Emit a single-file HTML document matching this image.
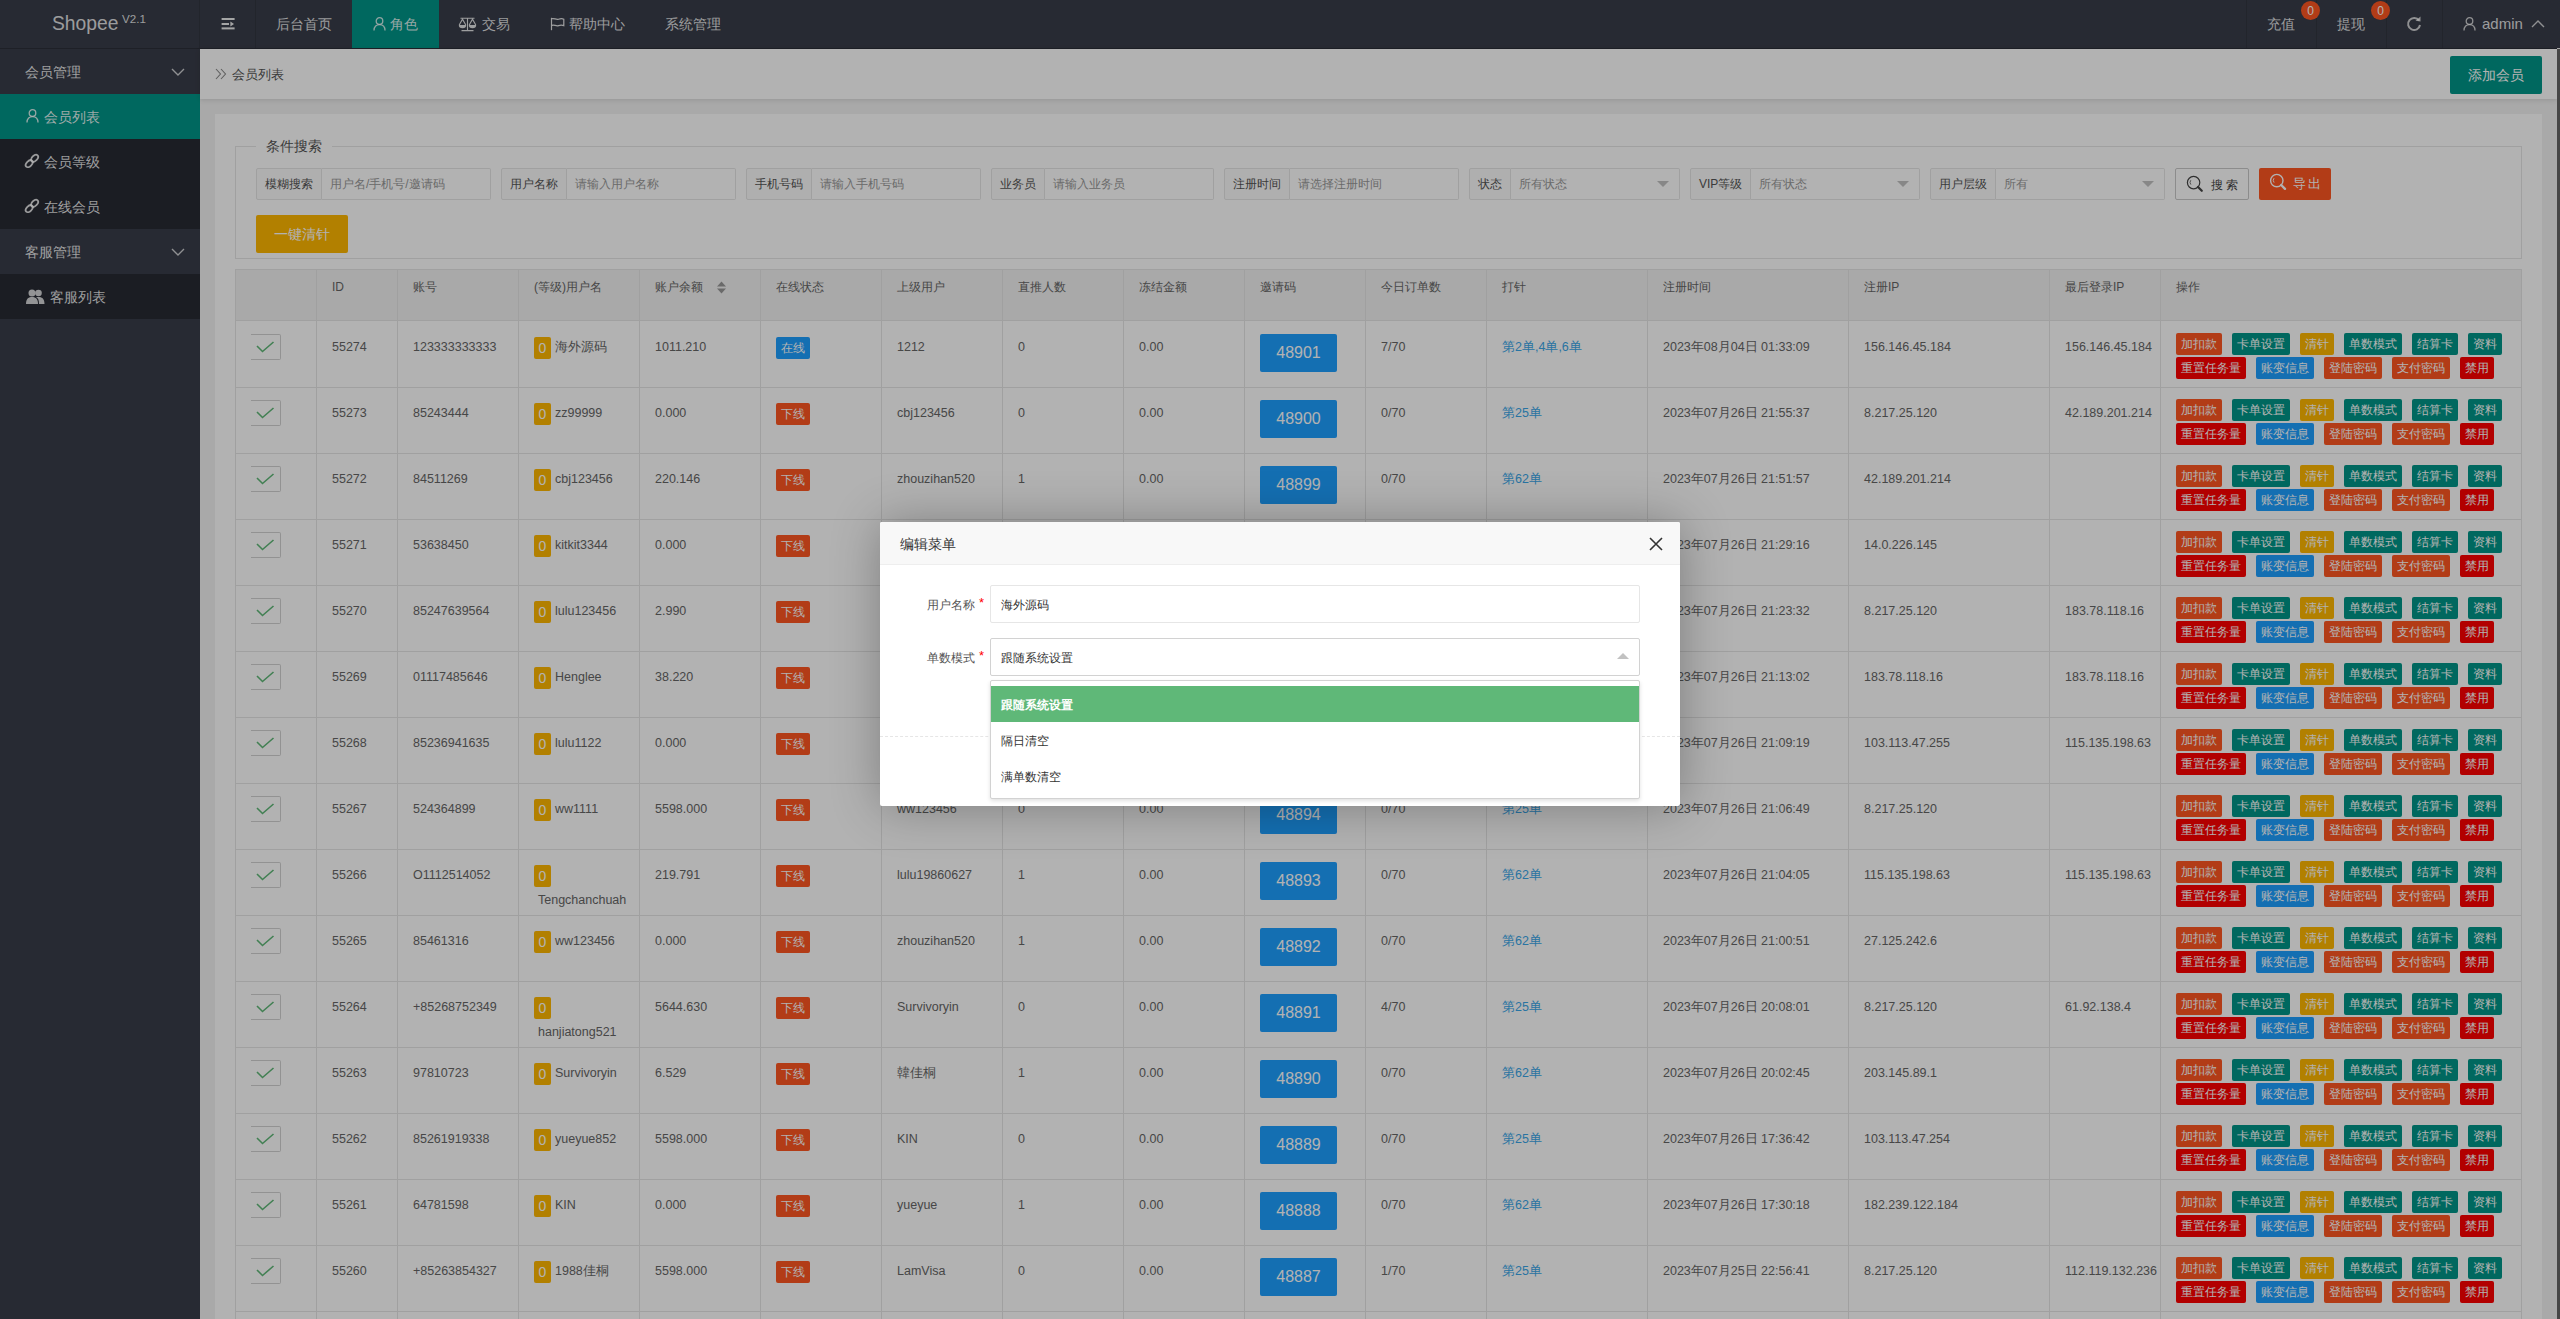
<!DOCTYPE html><html><head><meta charset='utf-8'><title>Shopee</title><style>
*{margin:0;padding:0;box-sizing:border-box}
html,body{width:2560px;height:1319px;overflow:hidden;background:#f2f2f2;
 font-family:"Liberation Sans",sans-serif;color:#666}
.a{position:absolute}
.t{position:absolute;white-space:nowrap;line-height:1}
#hdr{left:0;top:0;width:2560px;height:48px;background:#393D49}
#side{left:0;top:49px;width:200px;height:1270px;background:#393D49}
#hline48{left:0;top:48px;width:2557px;height:1px;background:#2b2e38}
.navt{color:rgba(255,255,255,.85);font-size:14px}
.sep{position:absolute;top:0;width:1px;height:48px;background:rgba(0,0,0,.12)}
.sg{position:absolute;left:0;width:200px;height:45px}
.child{background:rgba(0,0,0,.3)}
.st{color:rgba(255,255,255,.88);font-size:14px}
#crumb{left:200px;top:49px;width:2357px;height:50px;background:#fff;box-shadow:0 1px 5px rgba(0,0,0,.12)}
#card{left:215px;top:114px;width:2327px;height:1205px;background:#fff}
.fs{border:1px solid #e6e6e6}
.lbl{position:absolute;height:32px;border:1px solid #e6e6e6;background:#fbfbfb;font-size:12px;color:#555;line-height:30px;padding-left:8px;white-space:nowrap;border-radius:2px 0 0 2px}
.inp{position:absolute;height:32px;border:1px solid #e6e6e6;border-left:none;background:#fff;font-size:12px;color:#999;line-height:30px;padding-left:8px;white-space:nowrap;border-radius:0 2px 2px 0}
.tri{position:absolute;width:0;height:0;border-left:6px solid transparent;border-right:6px solid transparent;border-top:6px solid #c2c2c2}
.hline{position:absolute;height:1px;background:#e6e6e6}
.vline{position:absolute;width:1px;background:#e6e6e6}
.ct{position:absolute;white-space:nowrap;font-size:12.5px;color:#666;line-height:14px}
.bx{position:absolute;height:22px;line-height:22px;font-size:12px;color:#fff;border-radius:2px;padding:0 5px;white-space:nowrap;text-align:center}
.inv{position:absolute;width:77px;height:38px;line-height:38px;font-size:16px;color:#fff;background:#1E9FFF;border-radius:2px;text-align:center}
.chk{position:absolute;width:30px;height:26px;border:1px solid #d2d2d2;border-left:none;border-radius:0 2px 2px 0}
#shade{left:0;top:0;width:2560px;height:1319px;background:rgba(0,0,0,.3)}
#modal{left:880px;top:522px;width:800px;height:284px;background:#fff;box-shadow:1px 1px 50px rgba(0,0,0,.3);border-radius:2px}
</style></head><body><div id='hdr' class='a'><div class='t' style='left:52px;top:13.6px;font-size:19.3px;color:rgba(255,255,255,.85);font-family:"Liberation Sans",sans-serif'>Shopee</div><div class='t' style='left:122px;top:13.3px;font-size:11.6px;color:rgba(255,255,255,.85)'>V2.1</div><div class='sep' style='left:199px'></div><svg class='a' style='left:221px;top:17px' width='15' height='14' viewBox='0 0 15 14'><g fill='rgba(255,255,255,.9)'><rect x='0.6' y='1' width='13' height='2'/><rect x='0.6' y='6' width='7.4' height='2'/><path d='M9.4 4.6 L13 7 L9.4 9.4z'/><rect x='0.6' y='10.4' width='13' height='2'/></g></svg><div class='sep' style='left:255px'></div><div class='t navt' style='left:276px;top:17px'>后台首页</div><div class='a' style='left:352px;top:0;width:87px;height:48px;background:#009688'></div><svg class='a' style='left:373px;top:17px' width='13' height='14' viewBox='0 0 13 14'><circle cx='6.5' cy='4' r='3.3' fill='none' stroke='rgba(255,255,255,.8)' stroke-width='1.3'/><path d='M1 13.5 C1 9.5 3.5 7.6 6.5 7.6 C9.5 7.6 12 9.5 12 13.5' fill='none' stroke='rgba(255,255,255,.8)' stroke-width='1.3'/></svg><div class='t navt' style='left:390px;top:17px;color:rgba(255,255,255,.85)'>角色</div><svg class='a' style='left:458px;top:17px' width='19' height='15' viewBox='0 0 19 15'><g fill='none' stroke='rgba(255,255,255,.85)' stroke-width='1.1'><path d='M2.5 1.3 H16.5 M9.5 0.8 V13.5 M3.5 13.6 H15.5'/><path d='M1.2 8 L4.5 2.2 L7.8 8'/><path d='M11.2 8 L14.5 2.2 L17.8 8'/></g><g fill='rgba(255,255,255,.85)'><path d='M0.8 8 A3.7 3.2 0 0 0 8.2 8 Z'/><path d='M10.8 8 A3.7 3.2 0 0 0 18.2 8 Z'/></g></svg><div class='t navt' style='left:482px;top:17px'>交易</div><svg class='a' style='left:550px;top:17px' width='15' height='14' viewBox='0 0 15 14'><g fill='none' stroke='rgba(255,255,255,.85)' stroke-width='1.2'><path d='M1.5 0.8 V13.2'/><path d='M1.8 1.8 C4 0.8 6 3 8.5 2.2 C10.5 1.5 12.5 1.5 13.8 2.2 V8.6 C12 7.9 10.5 7.9 8.5 8.6 C6 9.5 4 7.2 1.8 8.4'/></g></svg><div class='t navt' style='left:569px;top:17px'>帮助中心</div><div class='t navt' style='left:665px;top:17px'>系统管理</div><div class='sep' style='left:2246px'></div><div class='sep' style='left:2316px'></div><div class='sep' style='left:2386px'></div><div class='sep' style='left:2442px'></div><div class='t navt' style='left:2267px;top:17px'>充值</div><div class='t navt' style='left:2337px;top:17px'>提现</div><div class='a' style='left:2301px;top:1px;width:19px;height:19px;border-radius:50%;background:#FF5722;color:#fff;font-size:12px;line-height:21px;text-align:center'>0</div><div class='a' style='left:2371px;top:1px;width:19px;height:19px;border-radius:50%;background:#FF5722;color:#fff;font-size:12px;line-height:21px;text-align:center'>0</div><svg class='a' style='left:2406px;top:16px' width='16' height='16' viewBox='0 0 16 16'><path d='M13 4.5 A6 6 0 1 0 14 9' fill='none' stroke='rgba(255,255,255,.75)' stroke-width='2'/><path d='M9.5 4.8 L14.5 5.5 L14.5 0.5 Z' fill='rgba(255,255,255,.75)'/></svg><svg class='a' style='left:2463px;top:17px' width='13' height='14' viewBox='0 0 13 14'><circle cx='6.5' cy='4' r='3.3' fill='none' stroke='rgba(255,255,255,.75)' stroke-width='1.3'/><path d='M1 13.5 C1 9.5 3.5 7.6 6.5 7.6 C9.5 7.6 12 9.5 12 13.5' fill='none' stroke='rgba(255,255,255,.75)' stroke-width='1.3'/></svg><div class='t navt' style='left:2482px;top:16px;font-size:15px'>admin</div><svg class='a' style='left:2531px;top:19px' width='14' height='9' viewBox='0 0 14 9'><path d='M1 8 L7 2 L13 8' fill='none' stroke='rgba(255,255,255,.75)' stroke-width='1.4'/></svg></div><div id='hline48' class='a'></div><div id='side' class='a'><div class='t st' style='left:25px;top:16px'>会员管理</div><svg class='a' style='left:171px;top:19px' width='14' height='8' viewBox='0 0 14 8'><path d='M1 1 L7 7 L13 1' fill='none' stroke='rgba(255,255,255,.75)' stroke-width='1.4'/></svg><div class='a child' style='left:0;top:45px;width:200px;height:135px'></div><div class='a' style='left:0;top:45px;width:200px;height:45px;background:#009688'></div><svg class='a' style='left:26px;top:60px' width='13' height='14' viewBox='0 0 13 14'><circle cx='6.5' cy='4' r='3.3' fill='none' stroke='rgba(255,255,255,.85)' stroke-width='1.3'/><path d='M1 13.5 C1 9.5 3.5 7.6 6.5 7.6 C9.5 7.6 12 9.5 12 13.5' fill='none' stroke='rgba(255,255,255,.85)' stroke-width='1.3'/></svg><div class='t st' style='left:44px;top:61px;color:rgba(255,255,255,.9)'>会员列表</div><svg class='a' style='left:24px;top:104px' width='16' height='16' viewBox='0 0 16 16'><g fill='none' stroke='rgba(255,255,255,.85)' stroke-width='1.8'><ellipse cx='10.6' cy='5.3' rx='4.2' ry='2.6' transform='rotate(-45 10.6 5.3)'/><ellipse cx='5.2' cy='10.7' rx='4.2' ry='2.6' transform='rotate(-45 5.2 10.7)'/></g></svg><div class='t st' style='left:44px;top:106px'>会员等级</div><svg class='a' style='left:24px;top:149px' width='16' height='16' viewBox='0 0 16 16'><g fill='none' stroke='rgba(255,255,255,.85)' stroke-width='1.8'><ellipse cx='10.6' cy='5.3' rx='4.2' ry='2.6' transform='rotate(-45 10.6 5.3)'/><ellipse cx='5.2' cy='10.7' rx='4.2' ry='2.6' transform='rotate(-45 5.2 10.7)'/></g></svg><div class='t st' style='left:44px;top:151px'>在线会员</div><div class='t st' style='left:25px;top:196px'>客服管理</div><svg class='a' style='left:171px;top:199px' width='14' height='8' viewBox='0 0 14 8'><path d='M1 1 L7 7 L13 1' fill='none' stroke='rgba(255,255,255,.75)' stroke-width='1.4'/></svg><div class='a child' style='left:0;top:225px;width:200px;height:45px'></div><svg class='a' style='left:26px;top:240px' width='19' height='15' viewBox='0 0 19 15'><g fill='rgba(255,255,255,.8)'><circle cx='6' cy='4' r='3.5'/><path d='M0 15 C0 9 3 8 6 8 C9 8 12 9 12 15z'/><circle cx='12.5' cy='4' r='3.3'/><path d='M10 8.3 C11 8 11.8 8 12.5 8 C15.5 8 18.5 9 18.5 15 H13 C13 11 12 9 10 8.3z'/></g></svg><div class='t st' style='left:50px;top:241px'>客服列表</div></div><div id='crumb' class='a'><svg class='a' style='left:15px;top:19px' width='12' height='12' viewBox='0 0 12 12'><path d='M1 1 L5.5 6 L1 11 M6 1 L10.5 6 L6 11' fill='none' stroke='#888' stroke-width='1.1'/></svg><div class='t' style='left:32px;top:19px;font-size:13px;color:#555'>会员列表</div><div class='a' style='left:2250px;top:7px;width:92px;height:38px;background:#009688;border-radius:2px;color:#fff;font-size:14px;line-height:38px;text-align:center'>添加会员</div></div><div class='a' style='left:2557px;top:49px;width:3px;height:1270px;background:#666'></div><div id='card' class='a'></div><div class='a fs' style='left:235px;top:146px;width:2287px;height:113px'></div><div class='t' style='left:256px;top:139px;padding:0 10px;background:#fff;font-size:14px;color:#555'>条件搜索</div><div class='lbl' style='left:256px;top:168px;width:66px'>模糊搜索</div><div class='inp' style='left:322px;top:168px;width:169px'>用户名/手机号/邀请码</div><div class='lbl' style='left:501px;top:168px;width:66px'>用户名称</div><div class='inp' style='left:567px;top:168px;width:169px'>请输入用户名称</div><div class='lbl' style='left:746px;top:168px;width:66px'>手机号码</div><div class='inp' style='left:812px;top:168px;width:169px'>请输入手机号码</div><div class='lbl' style='left:991px;top:168px;width:54px'>业务员</div><div class='inp' style='left:1045px;top:168px;width:169px'>请输入业务员</div><div class='lbl' style='left:1224px;top:168px;width:66px'>注册时间</div><div class='inp' style='left:1290px;top:168px;width:169px'>请选择注册时间</div><div class='lbl' style='left:1469px;top:168px;width:42px'>状态</div><div class='inp' style='left:1511px;top:168px;width:169px'>所有状态</div><div class='tri' style='left:1657px;top:181px'></div><div class='lbl' style='left:1690px;top:168px;width:61px'>VIP等级</div><div class='inp' style='left:1751px;top:168px;width:169px'>所有状态</div><div class='tri' style='left:1897px;top:181px'></div><div class='lbl' style='left:1930px;top:168px;width:66px'>用户层级</div><div class='inp' style='left:1996px;top:168px;width:169px'>所有</div><div class='tri' style='left:2142px;top:181px'></div><div class='a' style='left:2175px;top:168px;width:74px;height:32px;border:1px solid #C9C9C9;background:#fff;border-radius:2px'></div><svg class='a' style='left:2186px;top:175px' width='18' height='18' viewBox='0 0 18 18'><circle cx='7.6' cy='7.6' r='6.2' fill='none' stroke='#444' stroke-width='1.2'/><path d='M4.8 5.2 A3.6 3.6 0 0 0 4.9 9.6' fill='none' stroke='#666' stroke-width='0.9'/><path d='M12 12 L15.8 15.8' stroke='#444' stroke-width='2.2' stroke-linecap='round'/></svg><div class='t' style='left:2211px;top:179px;font-size:12px;color:#444;letter-spacing:3px'>搜索</div><div class='a' style='left:2259px;top:168px;width:72px;height:32px;background:#FF5722;border-radius:2px'></div><svg class='a' style='left:2269px;top:173px' width='18' height='18' viewBox='0 0 18 18'><circle cx='7.8' cy='7.6' r='6.2' fill='none' stroke='#fff' stroke-width='1.4'/><path d='M5 5.2 A3.6 3.6 0 0 0 5.1 9.6' fill='none' stroke='#fff' stroke-width='0.9'/><path d='M12.2 12 L16 15.8' stroke='#fff' stroke-width='2.4' stroke-linecap='round'/></svg><div class='t' style='left:2293px;top:177px;font-size:13px;color:#fff;letter-spacing:2px'>导出</div><div class='a' style='left:256px;top:215px;width:92px;height:38px;background:#FFB800;border-radius:2px;color:#fff;font-size:14px;line-height:38px;text-align:center'>一键清针</div><div class='a' style='left:235px;top:269px;width:2286px;height:51px;background:#f2f2f2'></div><div class='hline' style='left:235px;top:269px;width:2287px'></div><div class='hline' style='left:235px;top:320px;width:2287px'></div><div class='hline' style='left:235px;top:387px;width:2287px'></div><div class='hline' style='left:235px;top:453px;width:2287px'></div><div class='hline' style='left:235px;top:519px;width:2287px'></div><div class='hline' style='left:235px;top:585px;width:2287px'></div><div class='hline' style='left:235px;top:651px;width:2287px'></div><div class='hline' style='left:235px;top:717px;width:2287px'></div><div class='hline' style='left:235px;top:783px;width:2287px'></div><div class='hline' style='left:235px;top:849px;width:2287px'></div><div class='hline' style='left:235px;top:915px;width:2287px'></div><div class='hline' style='left:235px;top:981px;width:2287px'></div><div class='hline' style='left:235px;top:1047px;width:2287px'></div><div class='hline' style='left:235px;top:1113px;width:2287px'></div><div class='hline' style='left:235px;top:1179px;width:2287px'></div><div class='hline' style='left:235px;top:1245px;width:2287px'></div><div class='hline' style='left:235px;top:1311px;width:2287px'></div><div class='vline' style='left:235px;top:269px;height:1050px'></div><div class='vline' style='left:316px;top:269px;height:1050px'></div><div class='vline' style='left:397px;top:269px;height:1050px'></div><div class='vline' style='left:518px;top:269px;height:1050px'></div><div class='vline' style='left:639px;top:269px;height:1050px'></div><div class='vline' style='left:760px;top:269px;height:1050px'></div><div class='vline' style='left:881px;top:269px;height:1050px'></div><div class='vline' style='left:1002px;top:269px;height:1050px'></div><div class='vline' style='left:1123px;top:269px;height:1050px'></div><div class='vline' style='left:1244px;top:269px;height:1050px'></div><div class='vline' style='left:1365px;top:269px;height:1050px'></div><div class='vline' style='left:1486px;top:269px;height:1050px'></div><div class='vline' style='left:1647px;top:269px;height:1050px'></div><div class='vline' style='left:1848px;top:269px;height:1050px'></div><div class='vline' style='left:2049px;top:269px;height:1050px'></div><div class='vline' style='left:2160px;top:269px;height:1050px'></div><div class='vline' style='left:2521px;top:269px;height:1050px'></div><div class='ct' style='left:332px;top:280px;font-size:12px'>ID</div><div class='ct' style='left:413px;top:280px;font-size:12px'>账号</div><div class='ct' style='left:534px;top:280px;font-size:12px'>(等级)用户名</div><div class='ct' style='left:655px;top:280px;font-size:12px'>账户余额</div><div class='ct' style='left:776px;top:280px;font-size:12px'>在线状态</div><div class='ct' style='left:897px;top:280px;font-size:12px'>上级用户</div><div class='ct' style='left:1018px;top:280px;font-size:12px'>直推人数</div><div class='ct' style='left:1139px;top:280px;font-size:12px'>冻结金额</div><div class='ct' style='left:1260px;top:280px;font-size:12px'>邀请码</div><div class='ct' style='left:1381px;top:280px;font-size:12px'>今日订单数</div><div class='ct' style='left:1502px;top:280px;font-size:12px'>打针</div><div class='ct' style='left:1663px;top:280px;font-size:12px'>注册时间</div><div class='ct' style='left:1864px;top:280px;font-size:12px'>注册IP</div><div class='ct' style='left:2065px;top:280px;font-size:12px'>最后登录IP</div><div class='ct' style='left:2176px;top:280px;font-size:12px'>操作</div><svg class='a' style='left:716px;top:281px' width='11' height='13' viewBox='0 0 11 13'><path d='M5.5 0.5 L10 5.5 H1z M5.5 12.5 L10 7.5 H1z' fill='#999'/></svg><div class='chk' style='left:251px;top:334px'></div><svg class='a' style='left:256px;top:341px' width='19' height='13' viewBox='0 0 19 13'><path d='M1 5 L6.5 10.5 L17.5 1' fill='none' stroke='#5FB878' stroke-width='1.6'/></svg><div class='ct' style='left:332px;top:340px'>55274</div><div class='ct' style='left:413px;top:340px'>123333333333</div><div class='bx' style='left:534px;top:337px;width:17px;padding:0;background:#FFB800;font-size:14px'>0</div><div class='ct' style='left:555px;top:340px'>海外源码</div><div class='ct' style='left:655px;top:340px'>1011.210</div><div class='bx' style='left:776px;top:337px;width:34px;background:#1E9FFF'>在线</div><div class='ct' style='left:897px;top:340px'>1212</div><div class='ct' style='left:1018px;top:340px'>0</div><div class='ct' style='left:1139px;top:340px'>0.00</div><div class='inv' style='left:1260px;top:334px'>48901</div><div class='ct' style='left:1381px;top:340px'>7/70</div><div class='ct' style='left:1502px;top:340px;color:#3AA6E8'>第2单,4单,6单</div><div class='ct' style='left:1663px;top:340px'>2023年08月04日 01:33:09</div><div class='ct' style='left:1864px;top:340px'>156.146.45.184</div><div class='ct' style='left:2065px;top:340px'>156.146.45.184</div><div class='bx' style='left:2176px;top:333px;width:46px;background:#FF5722'>加扣款</div><div class='bx' style='left:2232px;top:333px;width:58px;background:#009688'>卡单设置</div><div class='bx' style='left:2300px;top:333px;width:34px;background:#FFB800'>清针</div><div class='bx' style='left:2344px;top:333px;width:58px;background:#009688'>单数模式</div><div class='bx' style='left:2412px;top:333px;width:46px;background:#009688'>结算卡</div><div class='bx' style='left:2468px;top:333px;width:34px;background:#009688'>资料</div><div class='bx' style='left:2176px;top:357px;width:70px;background:#FF0000'>重置任务量</div><div class='bx' style='left:2256px;top:357px;width:58px;background:#1E9FFF'>账变信息</div><div class='bx' style='left:2324px;top:357px;width:58px;background:#FF5722'>登陆密码</div><div class='bx' style='left:2392px;top:357px;width:58px;background:#FF5722'>支付密码</div><div class='bx' style='left:2460px;top:357px;width:34px;background:#FF0000'>禁用</div><div class='chk' style='left:251px;top:400px'></div><svg class='a' style='left:256px;top:407px' width='19' height='13' viewBox='0 0 19 13'><path d='M1 5 L6.5 10.5 L17.5 1' fill='none' stroke='#5FB878' stroke-width='1.6'/></svg><div class='ct' style='left:332px;top:406px'>55273</div><div class='ct' style='left:413px;top:406px'>85243444</div><div class='bx' style='left:534px;top:403px;width:17px;padding:0;background:#FFB800;font-size:14px'>0</div><div class='ct' style='left:555px;top:406px'>zz99999</div><div class='ct' style='left:655px;top:406px'>0.000</div><div class='bx' style='left:776px;top:403px;width:34px;background:#FF5722'>下线</div><div class='ct' style='left:897px;top:406px'>cbj123456</div><div class='ct' style='left:1018px;top:406px'>0</div><div class='ct' style='left:1139px;top:406px'>0.00</div><div class='inv' style='left:1260px;top:400px'>48900</div><div class='ct' style='left:1381px;top:406px'>0/70</div><div class='ct' style='left:1502px;top:406px;color:#3AA6E8'>第25单</div><div class='ct' style='left:1663px;top:406px'>2023年07月26日 21:55:37</div><div class='ct' style='left:1864px;top:406px'>8.217.25.120</div><div class='ct' style='left:2065px;top:406px'>42.189.201.214</div><div class='bx' style='left:2176px;top:399px;width:46px;background:#FF5722'>加扣款</div><div class='bx' style='left:2232px;top:399px;width:58px;background:#009688'>卡单设置</div><div class='bx' style='left:2300px;top:399px;width:34px;background:#FFB800'>清针</div><div class='bx' style='left:2344px;top:399px;width:58px;background:#009688'>单数模式</div><div class='bx' style='left:2412px;top:399px;width:46px;background:#009688'>结算卡</div><div class='bx' style='left:2468px;top:399px;width:34px;background:#009688'>资料</div><div class='bx' style='left:2176px;top:423px;width:70px;background:#FF0000'>重置任务量</div><div class='bx' style='left:2256px;top:423px;width:58px;background:#1E9FFF'>账变信息</div><div class='bx' style='left:2324px;top:423px;width:58px;background:#FF5722'>登陆密码</div><div class='bx' style='left:2392px;top:423px;width:58px;background:#FF5722'>支付密码</div><div class='bx' style='left:2460px;top:423px;width:34px;background:#FF0000'>禁用</div><div class='chk' style='left:251px;top:466px'></div><svg class='a' style='left:256px;top:473px' width='19' height='13' viewBox='0 0 19 13'><path d='M1 5 L6.5 10.5 L17.5 1' fill='none' stroke='#5FB878' stroke-width='1.6'/></svg><div class='ct' style='left:332px;top:472px'>55272</div><div class='ct' style='left:413px;top:472px'>84511269</div><div class='bx' style='left:534px;top:469px;width:17px;padding:0;background:#FFB800;font-size:14px'>0</div><div class='ct' style='left:555px;top:472px'>cbj123456</div><div class='ct' style='left:655px;top:472px'>220.146</div><div class='bx' style='left:776px;top:469px;width:34px;background:#FF5722'>下线</div><div class='ct' style='left:897px;top:472px'>zhouzihan520</div><div class='ct' style='left:1018px;top:472px'>1</div><div class='ct' style='left:1139px;top:472px'>0.00</div><div class='inv' style='left:1260px;top:466px'>48899</div><div class='ct' style='left:1381px;top:472px'>0/70</div><div class='ct' style='left:1502px;top:472px;color:#3AA6E8'>第62单</div><div class='ct' style='left:1663px;top:472px'>2023年07月26日 21:51:57</div><div class='ct' style='left:1864px;top:472px'>42.189.201.214</div><div class='bx' style='left:2176px;top:465px;width:46px;background:#FF5722'>加扣款</div><div class='bx' style='left:2232px;top:465px;width:58px;background:#009688'>卡单设置</div><div class='bx' style='left:2300px;top:465px;width:34px;background:#FFB800'>清针</div><div class='bx' style='left:2344px;top:465px;width:58px;background:#009688'>单数模式</div><div class='bx' style='left:2412px;top:465px;width:46px;background:#009688'>结算卡</div><div class='bx' style='left:2468px;top:465px;width:34px;background:#009688'>资料</div><div class='bx' style='left:2176px;top:489px;width:70px;background:#FF0000'>重置任务量</div><div class='bx' style='left:2256px;top:489px;width:58px;background:#1E9FFF'>账变信息</div><div class='bx' style='left:2324px;top:489px;width:58px;background:#FF5722'>登陆密码</div><div class='bx' style='left:2392px;top:489px;width:58px;background:#FF5722'>支付密码</div><div class='bx' style='left:2460px;top:489px;width:34px;background:#FF0000'>禁用</div><div class='chk' style='left:251px;top:532px'></div><svg class='a' style='left:256px;top:539px' width='19' height='13' viewBox='0 0 19 13'><path d='M1 5 L6.5 10.5 L17.5 1' fill='none' stroke='#5FB878' stroke-width='1.6'/></svg><div class='ct' style='left:332px;top:538px'>55271</div><div class='ct' style='left:413px;top:538px'>53638450</div><div class='bx' style='left:534px;top:535px;width:17px;padding:0;background:#FFB800;font-size:14px'>0</div><div class='ct' style='left:555px;top:538px'>kitkit3344</div><div class='ct' style='left:655px;top:538px'>0.000</div><div class='bx' style='left:776px;top:535px;width:34px;background:#FF5722'>下线</div><div class='ct' style='left:897px;top:538px'>zhouzihan520</div><div class='ct' style='left:1018px;top:538px'>0</div><div class='ct' style='left:1139px;top:538px'>0.00</div><div class='inv' style='left:1260px;top:532px'>48898</div><div class='ct' style='left:1381px;top:538px'>0/70</div><div class='ct' style='left:1502px;top:538px;color:#3AA6E8'>第25单</div><div class='ct' style='left:1663px;top:538px'>2023年07月26日 21:29:16</div><div class='ct' style='left:1864px;top:538px'>14.0.226.145</div><div class='bx' style='left:2176px;top:531px;width:46px;background:#FF5722'>加扣款</div><div class='bx' style='left:2232px;top:531px;width:58px;background:#009688'>卡单设置</div><div class='bx' style='left:2300px;top:531px;width:34px;background:#FFB800'>清针</div><div class='bx' style='left:2344px;top:531px;width:58px;background:#009688'>单数模式</div><div class='bx' style='left:2412px;top:531px;width:46px;background:#009688'>结算卡</div><div class='bx' style='left:2468px;top:531px;width:34px;background:#009688'>资料</div><div class='bx' style='left:2176px;top:555px;width:70px;background:#FF0000'>重置任务量</div><div class='bx' style='left:2256px;top:555px;width:58px;background:#1E9FFF'>账变信息</div><div class='bx' style='left:2324px;top:555px;width:58px;background:#FF5722'>登陆密码</div><div class='bx' style='left:2392px;top:555px;width:58px;background:#FF5722'>支付密码</div><div class='bx' style='left:2460px;top:555px;width:34px;background:#FF0000'>禁用</div><div class='chk' style='left:251px;top:598px'></div><svg class='a' style='left:256px;top:605px' width='19' height='13' viewBox='0 0 19 13'><path d='M1 5 L6.5 10.5 L17.5 1' fill='none' stroke='#5FB878' stroke-width='1.6'/></svg><div class='ct' style='left:332px;top:604px'>55270</div><div class='ct' style='left:413px;top:604px'>85247639564</div><div class='bx' style='left:534px;top:601px;width:17px;padding:0;background:#FFB800;font-size:14px'>0</div><div class='ct' style='left:555px;top:604px'>lulu123456</div><div class='ct' style='left:655px;top:604px'>2.990</div><div class='bx' style='left:776px;top:601px;width:34px;background:#FF5722'>下线</div><div class='ct' style='left:897px;top:604px'>lulu1122</div><div class='ct' style='left:1018px;top:604px'>0</div><div class='ct' style='left:1139px;top:604px'>0.00</div><div class='inv' style='left:1260px;top:598px'>48897</div><div class='ct' style='left:1381px;top:604px'>0/70</div><div class='ct' style='left:1502px;top:604px;color:#3AA6E8'>第62单</div><div class='ct' style='left:1663px;top:604px'>2023年07月26日 21:23:32</div><div class='ct' style='left:1864px;top:604px'>8.217.25.120</div><div class='ct' style='left:2065px;top:604px'>183.78.118.16</div><div class='bx' style='left:2176px;top:597px;width:46px;background:#FF5722'>加扣款</div><div class='bx' style='left:2232px;top:597px;width:58px;background:#009688'>卡单设置</div><div class='bx' style='left:2300px;top:597px;width:34px;background:#FFB800'>清针</div><div class='bx' style='left:2344px;top:597px;width:58px;background:#009688'>单数模式</div><div class='bx' style='left:2412px;top:597px;width:46px;background:#009688'>结算卡</div><div class='bx' style='left:2468px;top:597px;width:34px;background:#009688'>资料</div><div class='bx' style='left:2176px;top:621px;width:70px;background:#FF0000'>重置任务量</div><div class='bx' style='left:2256px;top:621px;width:58px;background:#1E9FFF'>账变信息</div><div class='bx' style='left:2324px;top:621px;width:58px;background:#FF5722'>登陆密码</div><div class='bx' style='left:2392px;top:621px;width:58px;background:#FF5722'>支付密码</div><div class='bx' style='left:2460px;top:621px;width:34px;background:#FF0000'>禁用</div><div class='chk' style='left:251px;top:664px'></div><svg class='a' style='left:256px;top:671px' width='19' height='13' viewBox='0 0 19 13'><path d='M1 5 L6.5 10.5 L17.5 1' fill='none' stroke='#5FB878' stroke-width='1.6'/></svg><div class='ct' style='left:332px;top:670px'>55269</div><div class='ct' style='left:413px;top:670px'>01117485646</div><div class='bx' style='left:534px;top:667px;width:17px;padding:0;background:#FFB800;font-size:14px'>0</div><div class='ct' style='left:555px;top:670px'>Henglee</div><div class='ct' style='left:655px;top:670px'>38.220</div><div class='bx' style='left:776px;top:667px;width:34px;background:#FF5722'>下线</div><div class='ct' style='left:897px;top:670px'>lulu1122</div><div class='ct' style='left:1018px;top:670px'>0</div><div class='ct' style='left:1139px;top:670px'>0.00</div><div class='inv' style='left:1260px;top:664px'>48896</div><div class='ct' style='left:1381px;top:670px'>0/70</div><div class='ct' style='left:1502px;top:670px;color:#3AA6E8'>第25单</div><div class='ct' style='left:1663px;top:670px'>2023年07月26日 21:13:02</div><div class='ct' style='left:1864px;top:670px'>183.78.118.16</div><div class='ct' style='left:2065px;top:670px'>183.78.118.16</div><div class='bx' style='left:2176px;top:663px;width:46px;background:#FF5722'>加扣款</div><div class='bx' style='left:2232px;top:663px;width:58px;background:#009688'>卡单设置</div><div class='bx' style='left:2300px;top:663px;width:34px;background:#FFB800'>清针</div><div class='bx' style='left:2344px;top:663px;width:58px;background:#009688'>单数模式</div><div class='bx' style='left:2412px;top:663px;width:46px;background:#009688'>结算卡</div><div class='bx' style='left:2468px;top:663px;width:34px;background:#009688'>资料</div><div class='bx' style='left:2176px;top:687px;width:70px;background:#FF0000'>重置任务量</div><div class='bx' style='left:2256px;top:687px;width:58px;background:#1E9FFF'>账变信息</div><div class='bx' style='left:2324px;top:687px;width:58px;background:#FF5722'>登陆密码</div><div class='bx' style='left:2392px;top:687px;width:58px;background:#FF5722'>支付密码</div><div class='bx' style='left:2460px;top:687px;width:34px;background:#FF0000'>禁用</div><div class='chk' style='left:251px;top:730px'></div><svg class='a' style='left:256px;top:737px' width='19' height='13' viewBox='0 0 19 13'><path d='M1 5 L6.5 10.5 L17.5 1' fill='none' stroke='#5FB878' stroke-width='1.6'/></svg><div class='ct' style='left:332px;top:736px'>55268</div><div class='ct' style='left:413px;top:736px'>85236941635</div><div class='bx' style='left:534px;top:733px;width:17px;padding:0;background:#FFB800;font-size:14px'>0</div><div class='ct' style='left:555px;top:736px'>lulu1122</div><div class='ct' style='left:655px;top:736px'>0.000</div><div class='bx' style='left:776px;top:733px;width:34px;background:#FF5722'>下线</div><div class='ct' style='left:897px;top:736px'>ww123456</div><div class='ct' style='left:1018px;top:736px'>1</div><div class='ct' style='left:1139px;top:736px'>0.00</div><div class='inv' style='left:1260px;top:730px'>48895</div><div class='ct' style='left:1381px;top:736px'>0/70</div><div class='ct' style='left:1502px;top:736px;color:#3AA6E8'>第62单</div><div class='ct' style='left:1663px;top:736px'>2023年07月26日 21:09:19</div><div class='ct' style='left:1864px;top:736px'>103.113.47.255</div><div class='ct' style='left:2065px;top:736px'>115.135.198.63</div><div class='bx' style='left:2176px;top:729px;width:46px;background:#FF5722'>加扣款</div><div class='bx' style='left:2232px;top:729px;width:58px;background:#009688'>卡单设置</div><div class='bx' style='left:2300px;top:729px;width:34px;background:#FFB800'>清针</div><div class='bx' style='left:2344px;top:729px;width:58px;background:#009688'>单数模式</div><div class='bx' style='left:2412px;top:729px;width:46px;background:#009688'>结算卡</div><div class='bx' style='left:2468px;top:729px;width:34px;background:#009688'>资料</div><div class='bx' style='left:2176px;top:753px;width:70px;background:#FF0000'>重置任务量</div><div class='bx' style='left:2256px;top:753px;width:58px;background:#1E9FFF'>账变信息</div><div class='bx' style='left:2324px;top:753px;width:58px;background:#FF5722'>登陆密码</div><div class='bx' style='left:2392px;top:753px;width:58px;background:#FF5722'>支付密码</div><div class='bx' style='left:2460px;top:753px;width:34px;background:#FF0000'>禁用</div><div class='chk' style='left:251px;top:796px'></div><svg class='a' style='left:256px;top:803px' width='19' height='13' viewBox='0 0 19 13'><path d='M1 5 L6.5 10.5 L17.5 1' fill='none' stroke='#5FB878' stroke-width='1.6'/></svg><div class='ct' style='left:332px;top:802px'>55267</div><div class='ct' style='left:413px;top:802px'>524364899</div><div class='bx' style='left:534px;top:799px;width:17px;padding:0;background:#FFB800;font-size:14px'>0</div><div class='ct' style='left:555px;top:802px'>ww1111</div><div class='ct' style='left:655px;top:802px'>5598.000</div><div class='bx' style='left:776px;top:799px;width:34px;background:#FF5722'>下线</div><div class='ct' style='left:897px;top:802px'>ww123456</div><div class='ct' style='left:1018px;top:802px'>0</div><div class='ct' style='left:1139px;top:802px'>0.00</div><div class='inv' style='left:1260px;top:796px'>48894</div><div class='ct' style='left:1381px;top:802px'>0/70</div><div class='ct' style='left:1502px;top:802px;color:#3AA6E8'>第25单</div><div class='ct' style='left:1663px;top:802px'>2023年07月26日 21:06:49</div><div class='ct' style='left:1864px;top:802px'>8.217.25.120</div><div class='bx' style='left:2176px;top:795px;width:46px;background:#FF5722'>加扣款</div><div class='bx' style='left:2232px;top:795px;width:58px;background:#009688'>卡单设置</div><div class='bx' style='left:2300px;top:795px;width:34px;background:#FFB800'>清针</div><div class='bx' style='left:2344px;top:795px;width:58px;background:#009688'>单数模式</div><div class='bx' style='left:2412px;top:795px;width:46px;background:#009688'>结算卡</div><div class='bx' style='left:2468px;top:795px;width:34px;background:#009688'>资料</div><div class='bx' style='left:2176px;top:819px;width:70px;background:#FF0000'>重置任务量</div><div class='bx' style='left:2256px;top:819px;width:58px;background:#1E9FFF'>账变信息</div><div class='bx' style='left:2324px;top:819px;width:58px;background:#FF5722'>登陆密码</div><div class='bx' style='left:2392px;top:819px;width:58px;background:#FF5722'>支付密码</div><div class='bx' style='left:2460px;top:819px;width:34px;background:#FF0000'>禁用</div><div class='chk' style='left:251px;top:862px'></div><svg class='a' style='left:256px;top:869px' width='19' height='13' viewBox='0 0 19 13'><path d='M1 5 L6.5 10.5 L17.5 1' fill='none' stroke='#5FB878' stroke-width='1.6'/></svg><div class='ct' style='left:332px;top:868px'>55266</div><div class='ct' style='left:413px;top:868px'>O1112514052</div><div class='bx' style='left:534px;top:865px;width:17px;padding:0;background:#FFB800;font-size:14px'>0</div><div class='ct' style='left:538px;top:893px'>Tengchanchuah</div><div class='ct' style='left:655px;top:868px'>219.791</div><div class='bx' style='left:776px;top:865px;width:34px;background:#FF5722'>下线</div><div class='ct' style='left:897px;top:868px'>lulu19860627</div><div class='ct' style='left:1018px;top:868px'>1</div><div class='ct' style='left:1139px;top:868px'>0.00</div><div class='inv' style='left:1260px;top:862px'>48893</div><div class='ct' style='left:1381px;top:868px'>0/70</div><div class='ct' style='left:1502px;top:868px;color:#3AA6E8'>第62单</div><div class='ct' style='left:1663px;top:868px'>2023年07月26日 21:04:05</div><div class='ct' style='left:1864px;top:868px'>115.135.198.63</div><div class='ct' style='left:2065px;top:868px'>115.135.198.63</div><div class='bx' style='left:2176px;top:861px;width:46px;background:#FF5722'>加扣款</div><div class='bx' style='left:2232px;top:861px;width:58px;background:#009688'>卡单设置</div><div class='bx' style='left:2300px;top:861px;width:34px;background:#FFB800'>清针</div><div class='bx' style='left:2344px;top:861px;width:58px;background:#009688'>单数模式</div><div class='bx' style='left:2412px;top:861px;width:46px;background:#009688'>结算卡</div><div class='bx' style='left:2468px;top:861px;width:34px;background:#009688'>资料</div><div class='bx' style='left:2176px;top:885px;width:70px;background:#FF0000'>重置任务量</div><div class='bx' style='left:2256px;top:885px;width:58px;background:#1E9FFF'>账变信息</div><div class='bx' style='left:2324px;top:885px;width:58px;background:#FF5722'>登陆密码</div><div class='bx' style='left:2392px;top:885px;width:58px;background:#FF5722'>支付密码</div><div class='bx' style='left:2460px;top:885px;width:34px;background:#FF0000'>禁用</div><div class='chk' style='left:251px;top:928px'></div><svg class='a' style='left:256px;top:935px' width='19' height='13' viewBox='0 0 19 13'><path d='M1 5 L6.5 10.5 L17.5 1' fill='none' stroke='#5FB878' stroke-width='1.6'/></svg><div class='ct' style='left:332px;top:934px'>55265</div><div class='ct' style='left:413px;top:934px'>85461316</div><div class='bx' style='left:534px;top:931px;width:17px;padding:0;background:#FFB800;font-size:14px'>0</div><div class='ct' style='left:555px;top:934px'>ww123456</div><div class='ct' style='left:655px;top:934px'>0.000</div><div class='bx' style='left:776px;top:931px;width:34px;background:#FF5722'>下线</div><div class='ct' style='left:897px;top:934px'>zhouzihan520</div><div class='ct' style='left:1018px;top:934px'>1</div><div class='ct' style='left:1139px;top:934px'>0.00</div><div class='inv' style='left:1260px;top:928px'>48892</div><div class='ct' style='left:1381px;top:934px'>0/70</div><div class='ct' style='left:1502px;top:934px;color:#3AA6E8'>第62单</div><div class='ct' style='left:1663px;top:934px'>2023年07月26日 21:00:51</div><div class='ct' style='left:1864px;top:934px'>27.125.242.6</div><div class='bx' style='left:2176px;top:927px;width:46px;background:#FF5722'>加扣款</div><div class='bx' style='left:2232px;top:927px;width:58px;background:#009688'>卡单设置</div><div class='bx' style='left:2300px;top:927px;width:34px;background:#FFB800'>清针</div><div class='bx' style='left:2344px;top:927px;width:58px;background:#009688'>单数模式</div><div class='bx' style='left:2412px;top:927px;width:46px;background:#009688'>结算卡</div><div class='bx' style='left:2468px;top:927px;width:34px;background:#009688'>资料</div><div class='bx' style='left:2176px;top:951px;width:70px;background:#FF0000'>重置任务量</div><div class='bx' style='left:2256px;top:951px;width:58px;background:#1E9FFF'>账变信息</div><div class='bx' style='left:2324px;top:951px;width:58px;background:#FF5722'>登陆密码</div><div class='bx' style='left:2392px;top:951px;width:58px;background:#FF5722'>支付密码</div><div class='bx' style='left:2460px;top:951px;width:34px;background:#FF0000'>禁用</div><div class='chk' style='left:251px;top:994px'></div><svg class='a' style='left:256px;top:1001px' width='19' height='13' viewBox='0 0 19 13'><path d='M1 5 L6.5 10.5 L17.5 1' fill='none' stroke='#5FB878' stroke-width='1.6'/></svg><div class='ct' style='left:332px;top:1000px'>55264</div><div class='ct' style='left:413px;top:1000px'>+85268752349</div><div class='bx' style='left:534px;top:997px;width:17px;padding:0;background:#FFB800;font-size:14px'>0</div><div class='ct' style='left:538px;top:1025px'>hanjiatong521</div><div class='ct' style='left:655px;top:1000px'>5644.630</div><div class='bx' style='left:776px;top:997px;width:34px;background:#FF5722'>下线</div><div class='ct' style='left:897px;top:1000px'>Survivoryin</div><div class='ct' style='left:1018px;top:1000px'>0</div><div class='ct' style='left:1139px;top:1000px'>0.00</div><div class='inv' style='left:1260px;top:994px'>48891</div><div class='ct' style='left:1381px;top:1000px'>4/70</div><div class='ct' style='left:1502px;top:1000px;color:#3AA6E8'>第25单</div><div class='ct' style='left:1663px;top:1000px'>2023年07月26日 20:08:01</div><div class='ct' style='left:1864px;top:1000px'>8.217.25.120</div><div class='ct' style='left:2065px;top:1000px'>61.92.138.4</div><div class='bx' style='left:2176px;top:993px;width:46px;background:#FF5722'>加扣款</div><div class='bx' style='left:2232px;top:993px;width:58px;background:#009688'>卡单设置</div><div class='bx' style='left:2300px;top:993px;width:34px;background:#FFB800'>清针</div><div class='bx' style='left:2344px;top:993px;width:58px;background:#009688'>单数模式</div><div class='bx' style='left:2412px;top:993px;width:46px;background:#009688'>结算卡</div><div class='bx' style='left:2468px;top:993px;width:34px;background:#009688'>资料</div><div class='bx' style='left:2176px;top:1017px;width:70px;background:#FF0000'>重置任务量</div><div class='bx' style='left:2256px;top:1017px;width:58px;background:#1E9FFF'>账变信息</div><div class='bx' style='left:2324px;top:1017px;width:58px;background:#FF5722'>登陆密码</div><div class='bx' style='left:2392px;top:1017px;width:58px;background:#FF5722'>支付密码</div><div class='bx' style='left:2460px;top:1017px;width:34px;background:#FF0000'>禁用</div><div class='chk' style='left:251px;top:1060px'></div><svg class='a' style='left:256px;top:1067px' width='19' height='13' viewBox='0 0 19 13'><path d='M1 5 L6.5 10.5 L17.5 1' fill='none' stroke='#5FB878' stroke-width='1.6'/></svg><div class='ct' style='left:332px;top:1066px'>55263</div><div class='ct' style='left:413px;top:1066px'>97810723</div><div class='bx' style='left:534px;top:1063px;width:17px;padding:0;background:#FFB800;font-size:14px'>0</div><div class='ct' style='left:555px;top:1066px'>Survivoryin</div><div class='ct' style='left:655px;top:1066px'>6.529</div><div class='bx' style='left:776px;top:1063px;width:34px;background:#FF5722'>下线</div><div class='ct' style='left:897px;top:1066px'>韓佳桐</div><div class='ct' style='left:1018px;top:1066px'>1</div><div class='ct' style='left:1139px;top:1066px'>0.00</div><div class='inv' style='left:1260px;top:1060px'>48890</div><div class='ct' style='left:1381px;top:1066px'>0/70</div><div class='ct' style='left:1502px;top:1066px;color:#3AA6E8'>第62单</div><div class='ct' style='left:1663px;top:1066px'>2023年07月26日 20:02:45</div><div class='ct' style='left:1864px;top:1066px'>203.145.89.1</div><div class='bx' style='left:2176px;top:1059px;width:46px;background:#FF5722'>加扣款</div><div class='bx' style='left:2232px;top:1059px;width:58px;background:#009688'>卡单设置</div><div class='bx' style='left:2300px;top:1059px;width:34px;background:#FFB800'>清针</div><div class='bx' style='left:2344px;top:1059px;width:58px;background:#009688'>单数模式</div><div class='bx' style='left:2412px;top:1059px;width:46px;background:#009688'>结算卡</div><div class='bx' style='left:2468px;top:1059px;width:34px;background:#009688'>资料</div><div class='bx' style='left:2176px;top:1083px;width:70px;background:#FF0000'>重置任务量</div><div class='bx' style='left:2256px;top:1083px;width:58px;background:#1E9FFF'>账变信息</div><div class='bx' style='left:2324px;top:1083px;width:58px;background:#FF5722'>登陆密码</div><div class='bx' style='left:2392px;top:1083px;width:58px;background:#FF5722'>支付密码</div><div class='bx' style='left:2460px;top:1083px;width:34px;background:#FF0000'>禁用</div><div class='chk' style='left:251px;top:1126px'></div><svg class='a' style='left:256px;top:1133px' width='19' height='13' viewBox='0 0 19 13'><path d='M1 5 L6.5 10.5 L17.5 1' fill='none' stroke='#5FB878' stroke-width='1.6'/></svg><div class='ct' style='left:332px;top:1132px'>55262</div><div class='ct' style='left:413px;top:1132px'>85261919338</div><div class='bx' style='left:534px;top:1129px;width:17px;padding:0;background:#FFB800;font-size:14px'>0</div><div class='ct' style='left:555px;top:1132px'>yueyue852</div><div class='ct' style='left:655px;top:1132px'>5598.000</div><div class='bx' style='left:776px;top:1129px;width:34px;background:#FF5722'>下线</div><div class='ct' style='left:897px;top:1132px'>KIN</div><div class='ct' style='left:1018px;top:1132px'>0</div><div class='ct' style='left:1139px;top:1132px'>0.00</div><div class='inv' style='left:1260px;top:1126px'>48889</div><div class='ct' style='left:1381px;top:1132px'>0/70</div><div class='ct' style='left:1502px;top:1132px;color:#3AA6E8'>第25单</div><div class='ct' style='left:1663px;top:1132px'>2023年07月26日 17:36:42</div><div class='ct' style='left:1864px;top:1132px'>103.113.47.254</div><div class='bx' style='left:2176px;top:1125px;width:46px;background:#FF5722'>加扣款</div><div class='bx' style='left:2232px;top:1125px;width:58px;background:#009688'>卡单设置</div><div class='bx' style='left:2300px;top:1125px;width:34px;background:#FFB800'>清针</div><div class='bx' style='left:2344px;top:1125px;width:58px;background:#009688'>单数模式</div><div class='bx' style='left:2412px;top:1125px;width:46px;background:#009688'>结算卡</div><div class='bx' style='left:2468px;top:1125px;width:34px;background:#009688'>资料</div><div class='bx' style='left:2176px;top:1149px;width:70px;background:#FF0000'>重置任务量</div><div class='bx' style='left:2256px;top:1149px;width:58px;background:#1E9FFF'>账变信息</div><div class='bx' style='left:2324px;top:1149px;width:58px;background:#FF5722'>登陆密码</div><div class='bx' style='left:2392px;top:1149px;width:58px;background:#FF5722'>支付密码</div><div class='bx' style='left:2460px;top:1149px;width:34px;background:#FF0000'>禁用</div><div class='chk' style='left:251px;top:1192px'></div><svg class='a' style='left:256px;top:1199px' width='19' height='13' viewBox='0 0 19 13'><path d='M1 5 L6.5 10.5 L17.5 1' fill='none' stroke='#5FB878' stroke-width='1.6'/></svg><div class='ct' style='left:332px;top:1198px'>55261</div><div class='ct' style='left:413px;top:1198px'>64781598</div><div class='bx' style='left:534px;top:1195px;width:17px;padding:0;background:#FFB800;font-size:14px'>0</div><div class='ct' style='left:555px;top:1198px'>KIN</div><div class='ct' style='left:655px;top:1198px'>0.000</div><div class='bx' style='left:776px;top:1195px;width:34px;background:#FF5722'>下线</div><div class='ct' style='left:897px;top:1198px'>yueyue</div><div class='ct' style='left:1018px;top:1198px'>1</div><div class='ct' style='left:1139px;top:1198px'>0.00</div><div class='inv' style='left:1260px;top:1192px'>48888</div><div class='ct' style='left:1381px;top:1198px'>0/70</div><div class='ct' style='left:1502px;top:1198px;color:#3AA6E8'>第62单</div><div class='ct' style='left:1663px;top:1198px'>2023年07月26日 17:30:18</div><div class='ct' style='left:1864px;top:1198px'>182.239.122.184</div><div class='bx' style='left:2176px;top:1191px;width:46px;background:#FF5722'>加扣款</div><div class='bx' style='left:2232px;top:1191px;width:58px;background:#009688'>卡单设置</div><div class='bx' style='left:2300px;top:1191px;width:34px;background:#FFB800'>清针</div><div class='bx' style='left:2344px;top:1191px;width:58px;background:#009688'>单数模式</div><div class='bx' style='left:2412px;top:1191px;width:46px;background:#009688'>结算卡</div><div class='bx' style='left:2468px;top:1191px;width:34px;background:#009688'>资料</div><div class='bx' style='left:2176px;top:1215px;width:70px;background:#FF0000'>重置任务量</div><div class='bx' style='left:2256px;top:1215px;width:58px;background:#1E9FFF'>账变信息</div><div class='bx' style='left:2324px;top:1215px;width:58px;background:#FF5722'>登陆密码</div><div class='bx' style='left:2392px;top:1215px;width:58px;background:#FF5722'>支付密码</div><div class='bx' style='left:2460px;top:1215px;width:34px;background:#FF0000'>禁用</div><div class='chk' style='left:251px;top:1258px'></div><svg class='a' style='left:256px;top:1265px' width='19' height='13' viewBox='0 0 19 13'><path d='M1 5 L6.5 10.5 L17.5 1' fill='none' stroke='#5FB878' stroke-width='1.6'/></svg><div class='ct' style='left:332px;top:1264px'>55260</div><div class='ct' style='left:413px;top:1264px'>+85263854327</div><div class='bx' style='left:534px;top:1261px;width:17px;padding:0;background:#FFB800;font-size:14px'>0</div><div class='ct' style='left:555px;top:1264px'>1988佳桐</div><div class='ct' style='left:655px;top:1264px'>5598.000</div><div class='bx' style='left:776px;top:1261px;width:34px;background:#FF5722'>下线</div><div class='ct' style='left:897px;top:1264px'>LamVisa</div><div class='ct' style='left:1018px;top:1264px'>0</div><div class='ct' style='left:1139px;top:1264px'>0.00</div><div class='inv' style='left:1260px;top:1258px'>48887</div><div class='ct' style='left:1381px;top:1264px'>1/70</div><div class='ct' style='left:1502px;top:1264px;color:#3AA6E8'>第25单</div><div class='ct' style='left:1663px;top:1264px'>2023年07月25日 22:56:41</div><div class='ct' style='left:1864px;top:1264px'>8.217.25.120</div><div class='ct' style='left:2065px;top:1264px'>112.119.132.236</div><div class='bx' style='left:2176px;top:1257px;width:46px;background:#FF5722'>加扣款</div><div class='bx' style='left:2232px;top:1257px;width:58px;background:#009688'>卡单设置</div><div class='bx' style='left:2300px;top:1257px;width:34px;background:#FFB800'>清针</div><div class='bx' style='left:2344px;top:1257px;width:58px;background:#009688'>单数模式</div><div class='bx' style='left:2412px;top:1257px;width:46px;background:#009688'>结算卡</div><div class='bx' style='left:2468px;top:1257px;width:34px;background:#009688'>资料</div><div class='bx' style='left:2176px;top:1281px;width:70px;background:#FF0000'>重置任务量</div><div class='bx' style='left:2256px;top:1281px;width:58px;background:#1E9FFF'>账变信息</div><div class='bx' style='left:2324px;top:1281px;width:58px;background:#FF5722'>登陆密码</div><div class='bx' style='left:2392px;top:1281px;width:58px;background:#FF5722'>支付密码</div><div class='bx' style='left:2460px;top:1281px;width:34px;background:#FF0000'>禁用</div><div class='chk' style='left:251px;top:1324px'></div><svg class='a' style='left:256px;top:1331px' width='19' height='13' viewBox='0 0 19 13'><path d='M1 5 L6.5 10.5 L17.5 1' fill='none' stroke='#5FB878' stroke-width='1.6'/></svg><div class='ct' style='left:332px;top:1330px'>55259</div><div class='ct' style='left:413px;top:1330px'>85200000000</div><div class='bx' style='left:534px;top:1327px;width:17px;padding:0;background:#FFB800;font-size:14px'>0</div><div class='ct' style='left:555px;top:1330px'>test</div><div class='ct' style='left:655px;top:1330px'>0.000</div><div class='bx' style='left:776px;top:1327px;width:34px;background:#FF5722'>下线</div><div class='ct' style='left:897px;top:1330px'>KIN</div><div class='ct' style='left:1018px;top:1330px'>0</div><div class='ct' style='left:1139px;top:1330px'>0.00</div><div class='inv' style='left:1260px;top:1324px'>48886</div><div class='ct' style='left:1381px;top:1330px'>0/70</div><div class='ct' style='left:1502px;top:1330px;color:#3AA6E8'>第25单</div><div class='ct' style='left:1663px;top:1330px'>2023年07月25日 22:50:11</div><div class='ct' style='left:1864px;top:1330px'>8.217.25.120</div><div class='bx' style='left:2176px;top:1323px;width:46px;background:#FF5722'>加扣款</div><div class='bx' style='left:2232px;top:1323px;width:58px;background:#009688'>卡单设置</div><div class='bx' style='left:2300px;top:1323px;width:34px;background:#FFB800'>清针</div><div class='bx' style='left:2344px;top:1323px;width:58px;background:#009688'>单数模式</div><div class='bx' style='left:2412px;top:1323px;width:46px;background:#009688'>结算卡</div><div class='bx' style='left:2468px;top:1323px;width:34px;background:#009688'>资料</div><div class='bx' style='left:2176px;top:1347px;width:70px;background:#FF0000'>重置任务量</div><div class='bx' style='left:2256px;top:1347px;width:58px;background:#1E9FFF'>账变信息</div><div class='bx' style='left:2324px;top:1347px;width:58px;background:#FF5722'>登陆密码</div><div class='bx' style='left:2392px;top:1347px;width:58px;background:#FF5722'>支付密码</div><div class='bx' style='left:2460px;top:1347px;width:34px;background:#FF0000'>禁用</div><div id='shade' class='a'></div><div id='modal' class='a'><div class='a' style='left:0;top:0;width:800px;height:43px;background:#F8F8F8;border-bottom:1px solid #eee;border-radius:2px 2px 0 0'></div><div class='t' style='left:20px;top:15px;font-size:14px;color:#333'>编辑菜单</div><svg class='a' style='left:769px;top:15px' width='14' height='14' viewBox='0 0 14 14'><path d='M1 1 L13 13 M13 1 L1 13' stroke='#333' stroke-width='1.6'/></svg><div class='t' style='left:47px;top:77px;font-size:12px;color:#555'>用户名称</div><div class='t' style='left:99px;top:74px;font-size:13px;color:#f00'>*</div><div class='t' style='left:47px;top:130px;font-size:12px;color:#555'>单数模式</div><div class='t' style='left:99px;top:127px;font-size:13px;color:#f00'>*</div><div class='a' style='left:110px;top:63px;width:650px;height:38px;border:1px solid #e6e6e6;border-radius:2px;background:#fff'></div><div class='t' style='left:121px;top:77px;font-size:12px;color:#333'>海外源码</div><div class='a' style='left:110px;top:116px;width:650px;height:38px;border:1px solid #d2d2d2;border-radius:2px;background:#fff'></div><div class='t' style='left:121px;top:130px;font-size:12px;color:#333'>跟随系统设置</div><div class='a' style='left:737px;top:131px;width:0;height:0;border-left:6px solid transparent;border-right:6px solid transparent;border-bottom:6px solid #c2c2c2'></div><div class='a' style='left:0;top:214px;width:800px;height:0;border-top:1px dashed #e6e6e6'></div><div class='a' style='left:110px;top:158px;width:650px;height:119px;border:1px solid #d2d2d2;border-radius:2px;background:#fff;box-shadow:0 2px 4px rgba(0,0,0,.12)'></div><div class='a' style='left:111px;top:164px;width:648px;height:36px;background:#5FB878'></div><div class='t' style='left:121px;top:177px;font-size:12px;color:#fff;font-weight:bold'>跟随系统设置</div><div class='t' style='left:121px;top:213px;font-size:12px;color:#333'>隔日清空</div><div class='t' style='left:121px;top:249px;font-size:12px;color:#333'>满单数清空</div></div></body></html>
